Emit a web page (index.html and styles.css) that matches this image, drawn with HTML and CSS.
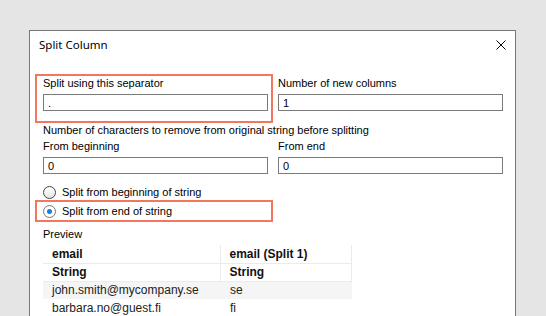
FILE: index.html
```html
<!DOCTYPE html>
<html lang="en">
<head>
    <meta charset="UTF-8">
    <meta name="viewport" content="width=device-width, initial-scale=1.0">
    <title>Split Column</title>
    <link rel="stylesheet" href="styles.css">
</head>
<body>
    <div class="dialog">
        <div class="titlebar">
            <span class="title">Split Column</span>
            <button class="close" aria-label="Close">
                <svg width="10" height="10" viewBox="0 0 10 10">
                    <path d="M0.5 0.5 L9.5 9.5 M9.5 0.5 L0.5 9.5" stroke="#000" stroke-width="1" fill="none"/>
                </svg>
            </button>
        </div>

        <div class="content">
            <div class="grid">
                <div class="field highlight">
                    <label>Split using this separator</label>
                    <input class="input" type="text" value=".">
                </div>
                <div class="field">
                    <label>Number of new columns</label>
                    <input class="input" type="text" value="1">
                </div>
            </div>

            <div class="note">Number of characters to remove from original string before splitting</div>
            <div class="grid">
                <div class="field plain">
                    <label>From beginning</label>
                    <input class="input" type="text" value="0">
                </div>
                <div class="field plain">
                    <label>From end</label>
                    <input class="input" type="text" value="0">
                </div>
            </div>

            <div class="radios">
                <label class="radio"><span class="circle"></span>Split from beginning of string</label>
                <label class="radio highlight checked"><span class="circle"></span>Split from end of string</label>
            </div>

            <div class="preview-label">Preview</div>
            <table class="preview">
                <tr class="head">
                    <th>email</th>
                    <th>email (Split 1)</th>
                </tr>
                <tr class="head">
                    <th>String</th>
                    <th>String</th>
                </tr>
                <tr class="odd">
                    <td>john.smith@mycompany.se</td>
                    <td>se</td>
                </tr>
                <tr>
                    <td>barbara.no@guest.fi</td>
                    <td>fi</td>
                </tr>
            </table>
        </div>
    </div>
</body>
</html>
```

FILE: styles.css
```css
body {
    margin: 0;
    padding: 30px 0 0 29px;
    background-color: #e5e5e5;
    font-family: "Liberation Sans", Arial, sans-serif;
    font-size: 11px;
    color: #000;
    overflow: hidden;
}
.dialog {
    width: 487px;
    height: 300px;
    box-sizing: border-box;
    background: #fff;
    border: 1px solid #777;
    border-bottom: none;
}
.titlebar {
    display: flex;
    justify-content: space-between;
    align-items: center;
    padding: 6px 9px 0 9px;
    height: 16px;
}
.title {
    font-family: "Noto Sans", sans-serif;
    font-size: 11.5px;
    line-height: 16px;
    color: #000;
}
.close {
    border: none;
    background: none;
    padding: 0;
    width: 10px;
    height: 10px;
    display: flex;
}
.content {
    padding: 21px 12px 0 13px;
}
.grid {
    display: grid;
    grid-template-columns: 225px 225px;
    column-gap: 10px;
}
.field {
    display: flex;
    flex-direction: column;
    padding-top: 3px;
}
.field label {
    line-height: 13px;
    margin-bottom: 4px;
}
.input {
    box-sizing: border-box;
    width: 225px;
    height: 17px;
    border: 1px solid #7a7a7a;
    padding: 0 4px;
    margin: 0;
    font-family: "Liberation Sans", Arial, sans-serif;
    font-size: 11px;
    color: #000;
    outline: none;
}
.highlight {
    border: 2px solid #f2775f;
    margin-left: -8px;
    margin-right: -5px;
    padding-left: 6px;
    padding-right: 3px;
}
.field.highlight {
    padding-top: 1px;
    padding-bottom: 10px;
}
.note {
    line-height: 13px;
    margin-top: 1px;
}
.radios {
    margin-top: 11px;
}
.radio {
    display: flex;
    align-items: center;
    height: 15px;
    line-height: 13px;
}
.radio.highlight {
    width: 238px;
    box-sizing: border-box;
    height: 22px;
}
.circle {
    width: 13px;
    height: 13px;
    box-sizing: border-box;
    border: 1px solid #444;
    border-radius: 50%;
    background: linear-gradient(#fff, #e6e6e6);
    margin-right: 6px;
    display: flex;
    align-items: center;
    justify-content: center;
}
.checked .circle {
    border-color: #777;
    background: #fff;
}
.checked .circle::after {
    content: "";
    width: 5px;
    height: 5px;
    border-radius: 50%;
    background: #0a84e0;
}
.preview-label {
    line-height: 13px;
    margin-top: 6px;
}
.preview {
    margin-top: 4px;
    border-collapse: collapse;
    width: 309px;
    font-size: 12px;
}
.preview th,
.preview td {
    height: 18px;
    padding: 0 0 0 9px;
    text-align: left;
    white-space: nowrap;
    box-sizing: border-box;
}
.preview th {
    font-weight: bold;
    border-right: 1px solid #ebebeb;
    border-bottom: 1px solid #ebebeb;
    color: #111;
}
.preview td {
    color: #222;
}
.preview th:first-child,
.preview td:first-child {
    width: 177px;
}
.preview td:last-child {
    padding-left: 10px;
}
.preview .odd td {
    background: #f5f5f5;
}
```
